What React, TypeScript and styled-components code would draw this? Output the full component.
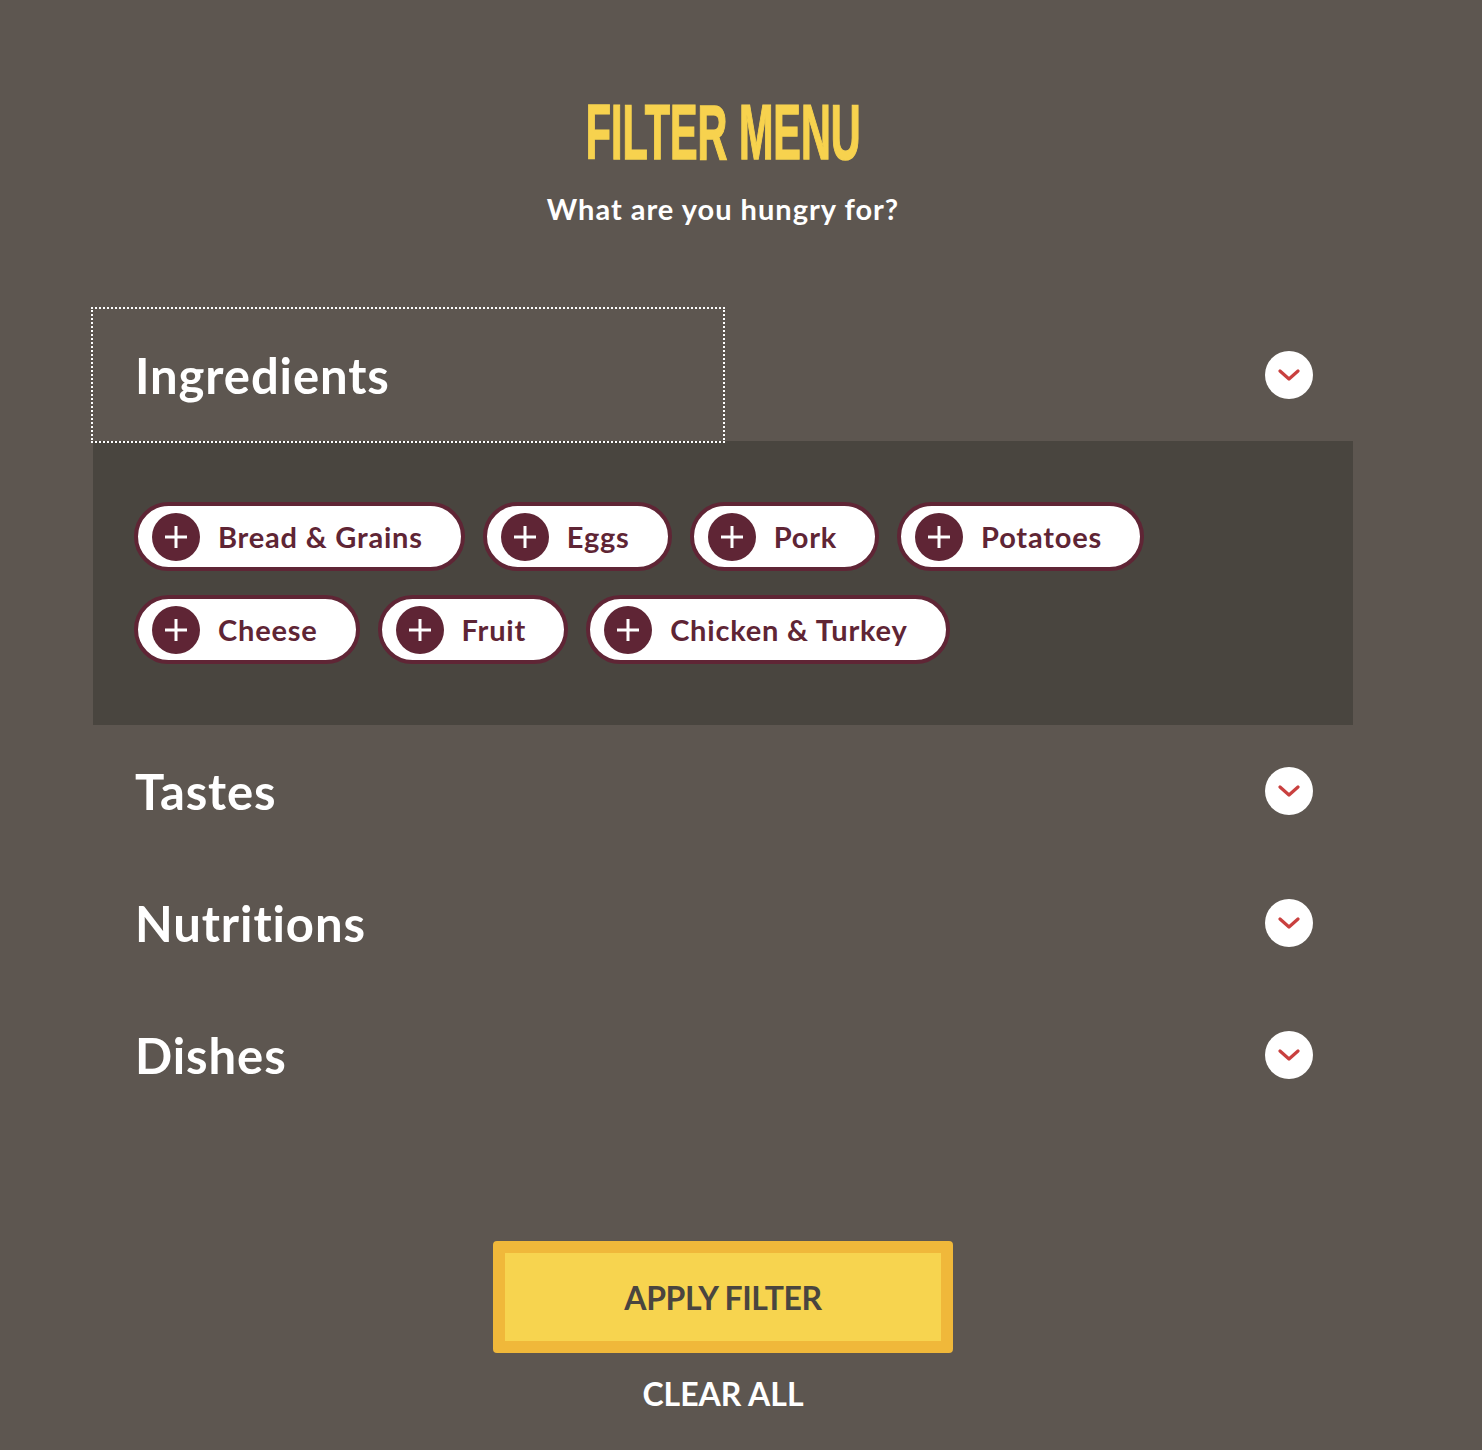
import React from 'react';
import styled, { createGlobalStyle } from 'styled-components';

const GlobalStyle = createGlobalStyle`
  html, body {
    margin: 0;
    padding: 0;
    background: #5d5650;
  }
  body {
    font-family: Lato, "Open Sans", sans-serif;
  }
`;

const Page = styled.div`
  width: 1260px;
  margin-left: 93px;
  padding-top: 90px;
  padding-bottom: 40px;
`;

const Title = styled.h1`
  margin: 0;
  text-align: center;
  color: #f7d24e;
  font-family: "Liberation Sans", Arial, sans-serif;
  font-weight: 700;
  font-size: 78px;
  line-height: 84px;
`;

const TitleText = styled.span`
  display: inline-block;
  transform: scaleX(0.53);
  -webkit-text-stroke: 1.5px #f7d24e;
`;

const Subtitle = styled.p`
  margin: 17px 0 0;
  text-align: center;
  color: #fff;
  font-size: 29px;
  font-weight: 700;
  letter-spacing: 1px;
  line-height: 36px;
`;

const Sections = styled.div`
  margin-top: 82px;
`;

const SectionHeader = styled.div`
  display: flex;
  align-items: center;
  justify-content: space-between;
  height: 132px;
  padding-right: 40px;
`;

const SectionTitle = styled.button<{ $focused?: boolean }>`
  width: 630px;
  height: 132px;
  padding: 0 0 0 42px;
  border: none;
  background: none;
  text-align: left;
  color: #fff;
  font-family: Lato, "Open Sans", sans-serif;
  font-size: 49px;
  font-weight: 700;
  letter-spacing: 0.9px;
  cursor: pointer;
  outline: ${p => (p.$focused ? '2px dotted #fff' : 'none')};
`;

const Toggle = styled.span`
  display: flex;
  align-items: center;
  justify-content: center;
  width: 48px;
  height: 48px;
  border-radius: 50%;
  background: #fff;
`;

const Panel = styled.div`
  display: flex;
  flex-wrap: wrap;
  gap: 24px 18px;
  padding: 61px 41px;
  background: #49453f;
`;

const Chip = styled.button`
  display: flex;
  align-items: center;
  gap: 18px;
  box-sizing: border-box;
  height: 69px;
  padding: 0 38px 0 14px;
  border: 4px solid #5f2535;
  border-radius: 35px;
  background: #fff;
  color: #5f2535;
  font-family: Lato, "Open Sans", sans-serif;
  font-size: 29px;
  font-weight: 700;
  letter-spacing: 0.8px;
  cursor: pointer;
`;

const PlusBadge = styled.span`
  display: flex;
  align-items: center;
  justify-content: center;
  width: 48px;
  height: 48px;
  border-radius: 50%;
  background: #5f2535;
`;

const Footer = styled.div`
  display: flex;
  flex-direction: column;
  align-items: center;
  margin-top: 120px;
`;

const ApplyButton = styled.button`
  box-sizing: border-box;
  width: 460px;
  height: 112px;
  border: 12px solid #f0b83a;
  border-radius: 4px;
  background: #f7d44f;
  color: #4a453f;
  font-family: Lato, "Open Sans", sans-serif;
  font-size: 32px;
  font-weight: 700;
  letter-spacing: -0.4px;
  cursor: pointer;
`;

const ClearButton = styled.button`
  margin-top: 20px;
  border: none;
  background: none;
  color: #fff;
  font-family: Lato, "Open Sans", sans-serif;
  font-size: 32px;
  font-weight: 700;
  cursor: pointer;
`;

const Chevron = () => (
  <svg width="22" height="12" viewBox="0 0 22 12" fill="none">
    <path d="M2 2l9 8 9-8" stroke="#c9403f" strokeWidth="3.2" strokeLinecap="round" strokeLinejoin="round" />
  </svg>
);

const Plus = () => (
  <svg width="24" height="24" viewBox="0 0 24 24">
    <path d="M12 1v22M1 12h22" stroke="#fff" strokeWidth="3" />
  </svg>
);

const ingredients = ['Bread & Grains', 'Eggs', 'Pork', 'Potatoes', 'Cheese', 'Fruit', 'Chicken & Turkey'];

const sections = [
  { name: 'Ingredients', open: true },
  { name: 'Tastes', open: false },
  { name: 'Nutritions', open: false },
  { name: 'Dishes', open: false },
];

const App: React.FC = () => {
  return (
    <>
      <GlobalStyle />
      <Page>
        <Title>
          <TitleText>FILTER MENU</TitleText>
        </Title>
        <Subtitle>What are you hungry for?</Subtitle>
        <Sections>
          {sections.map(s => (
            <section key={s.name}>
              <SectionHeader>
                <SectionTitle $focused={s.open}>{s.name}</SectionTitle>
                <Toggle>
                  <Chevron />
                </Toggle>
              </SectionHeader>
              {s.open && (
                <Panel>
                  {ingredients.map(item => (
                    <Chip key={item}>
                      <PlusBadge>
                        <Plus />
                      </PlusBadge>
                      {item}
                    </Chip>
                  ))}
                </Panel>
              )}
            </section>
          ))}
        </Sections>
        <Footer>
          <ApplyButton>APPLY FILTER</ApplyButton>
          <ClearButton>CLEAR ALL</ClearButton>
        </Footer>
      </Page>
    </>
  );
};

export default App;
